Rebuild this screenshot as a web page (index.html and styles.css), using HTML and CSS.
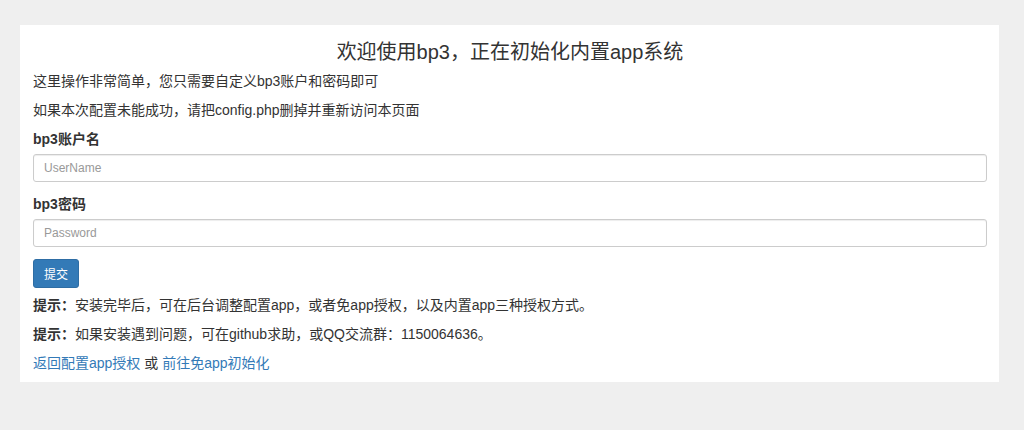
FILE: index.html
```html
<!doctype html>
<html lang="zh-CN">
    <head>
        <meta charset="UTF-8">
        <meta name="viewport" content="width=device-width, initial-scale=1.0">
        <title>bp3 内置app初始化</title>
        <link rel="stylesheet" href="styles.css">
    </head>
    <body>
        <div class="wrap">
            <div class="panel">
                <h3 class="title">欢迎使用bp3，正在初始化内置app系统</h3>
                <p>这里操作非常简单，您只需要自定义bp3账户和密码即可</p>
                <p>如果本次配置未能成功，请把config.php删掉并重新访问本页面</p>
                <form>
                    <div class="form-group">
                        <label for="user">bp3账户名</label>
                        <input type="text" id="user" class="form-control" placeholder="UserName">
                    </div>
                    <div class="form-group">
                        <label for="pass">bp3密码</label>
                        <input type="password" id="pass" class="form-control" placeholder="Password">
                    </div>
                    <button type="button" class="btn">提交</button>
                </form>
                <p class="tip"><b>提示：</b>安装完毕后，可在后台调整配置app，或者免app授权，以及内置app三种授权方式。</p>
                <p class="tip"><b>提示：</b>如果安装遇到问题，可在github求助，或QQ交流群：1150064636。</p>
                <p class="links"><a href="#">返回配置app授权</a> 或 <a href="#">前往免app初始化</a></p>
            </div>
        </div>
    </body>
</html>
```

FILE: styles.css
```css
body {
    margin: 0;
    background: #efefef;
    color: #333;
    font-family: "Liberation Sans", Arial, "Noto Sans CJK SC", sans-serif;
    font-size: 14px;
    line-height: 20px;
}
.wrap {
    padding: 25px 25px 0 20px;
}
.panel {
    background: #fff;
    padding: 13px 12px 9px 13px;
}
.title {
    margin: 0 0 5px;
    font-size: 20px;
    line-height: 28px;
    font-weight: normal;
    text-align: center;
}
p {
    margin: 0 0 9px;
}
form {
    margin: 0;
}
label {
    display: block;
    font-weight: bold;
    margin-bottom: 5px;
}
.form-group {
    margin-bottom: 12px;
}
.form-control {
    display: block;
    box-sizing: border-box;
    width: 100%;
    height: 28px;
    padding: 4px 10px;
    font-family: inherit;
    font-size: 12px;
    color: #555;
    border: 1px solid #ccc;
    border-radius: 3px;
    box-shadow: inset 0 1px 1px rgba(0, 0, 0, .075);
    outline: none;
}
.form-control::placeholder {
    color: #999;
}
.btn {
    display: block;
    height: 29px;
    padding: 0 10px;
    margin: 0 0 7px;
    font-family: inherit;
    font-size: 12px;
    color: #fff;
    background: #337ab7;
    border: 1px solid #2e6da4;
    border-radius: 3px;
}
.tip b {
    font-weight: bold;
}
.links {
    margin: 0;
}
a {
    color: #337ab7;
    text-decoration: none;
}
```
